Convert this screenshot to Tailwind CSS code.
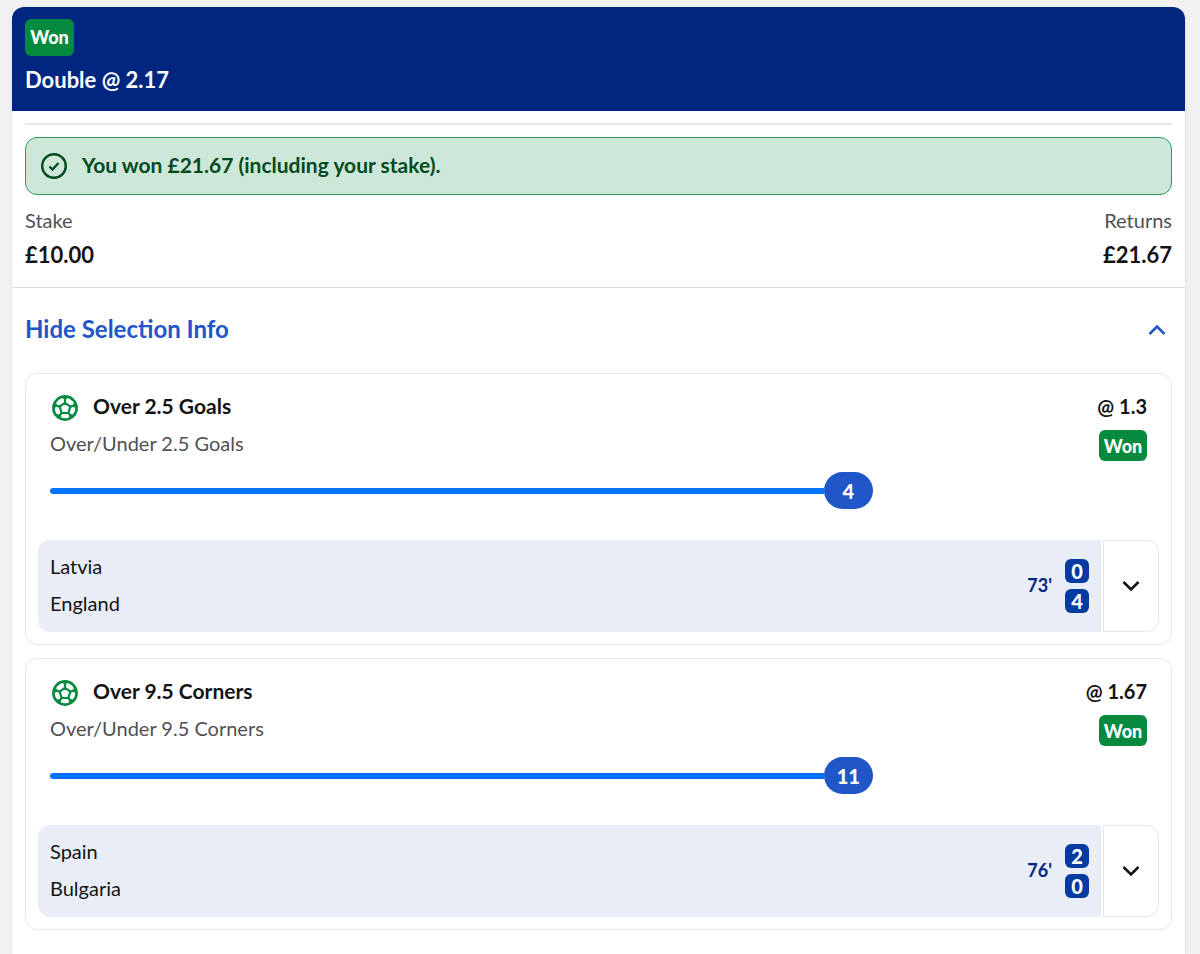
<!DOCTYPE html>
<html lang="en">

<head>
  <meta charset="UTF-8" />
  <meta name="viewport" content="width=device-width, initial-scale=1.0" />
  <title>My Bets</title>
  <script src="https://cdn.jsdelivr.net/npm/@tailwindcss/browser@4"></script>
</head>

<body class="bg-[#f1f1f2] pt-[7px] pl-3 pr-[15px] font-['Lato','Noto_Sans',sans-serif] text-xl leading-[26px] text-[#141414]">
  <svg class="hidden">
    <symbol id="football" viewBox="0 0 26 26">
      <g fill="none" stroke="currentColor" stroke-width="2.2" stroke-linejoin="round">
        <circle cx="13" cy="13" r="11.6" stroke-width="2.6" />
        <path d="M13 7.800l5.400 3.900-2.100 6.300H9.700L7.600 11.700z" />
        <path d="M13 7.800V3M18.400 11.700l4.300-1.700M16.300 18l2.900 3.500M9.700 18l-2.900 3.500M7.600 11.700l-4.300-1.700" />
      </g>
      <path d="M10 2h6l-3 3.500zM22.200 7.500l1.800 6-3.500-2.500zM21.500 19.500l-5 3.500 1-4zM4.500 19.500l5 3.500-1-4zM3.800 7.500l-1.800 6 3.500-2.500z" fill="currentColor" />
    </symbol>
    <symbol id="chevron" viewBox="0 0 18 12">
      <path d="M1.500 2l7.500 7.500L16.500 2" fill="none" stroke="currentColor" stroke-width="2.600" />
    </symbol>
  </svg>

  <main class="min-h-[calc(100vh-7px)] bg-white rounded-t-xl shadow-sm">
    <!-- Bet header -->
    <header class="rounded-t-xl bg-[#00267f] px-[13px] pt-3 pb-4 text-white">
      <span class="flex h-[37px] w-[49px] items-center justify-center rounded-md bg-[#058a40] pb-0.5 text-lg font-black">Won</span>
      <h1 class="mt-[9px] text-[22px] leading-[30px] font-bold">Double @ 2.17</h1>
    </header>

    <!-- Stake and returns -->
    <section class="border-b border-[#dcdcde] px-[13px] pt-3 pb-4">
      <hr class="border-t-2 border-[#e8e8ea]" />
      <p class="mt-3 flex h-[58px] items-center gap-3.5 rounded-xl border border-[#2f9a62] bg-[#cde8d9] px-3.5 text-[21px] font-bold text-[#03491f]">
        <svg class="size-7" viewBox="0 0 28 28" fill="none" stroke="currentColor" stroke-width="2.400">
          <circle cx="14" cy="14" r="11.800" />
          <path d="M9.500 14.500l3 3 6-6.500" />
        </svg>
        <span class="pb-0.5">You won £21.67 (including your stake).</span>
      </p>
      <dl class="mt-3 flex justify-between">
        <div>
          <dt class="text-[#505054]">Stake</dt>
          <dd class="mt-1.5 text-[22px] leading-8 font-bold">£10.00</dd>
        </div>
        <div class="text-right">
          <dt class="text-[#505054]">Returns</dt>
          <dd class="mt-1.5 text-[22px] leading-8 font-bold">£21.67</dd>
        </div>
      </dl>
    </section>

    <button type="button" class="flex h-[85px] w-full items-center justify-between pb-0.5 pl-[13px] pr-[19px] text-2xl font-bold text-[#2056c7]">
      <span class="pb-0.5">Hide Selection Info</span>
      <svg class="h-3 w-[18px] rotate-180"><use href="#chevron" /></svg>
    </button>

    <!-- Selections -->
    <div class="space-y-[13px] px-[13px] pb-6">
      <article class="rounded-xl border border-[#e8e8ea] px-3 pt-[19px] pb-3">
        <div class="flex justify-between px-3">
          <div>
            <h2 class="flex items-start gap-[15px] pl-0.5 text-[21px] font-bold">
              <svg class="mt-0.5 size-[26px] text-[#058a40]"><use href="#football" /></svg>
              Over 2.5 Goals
            </h2>
            <p class="mt-[9px] text-[#505054]">Over/Under 2.5 Goals</p>
          </div>
          <div class="flex flex-col items-end">
            <span class="font-bold">@ 1.3</span>
            <span class="mt-[11px] flex h-[31px] w-12 items-center justify-center rounded-md bg-[#058a40] text-lg font-black text-white">Won</span>
          </div>
        </div>
        <div class="mt-[11px] px-3">
          <div class="flex items-center" style="width: 75%">
            <div class="h-1.5 flex-1 rounded-l-full bg-[#0073ff]"></div>
            <span class="flex h-[37px] w-[49px] items-center justify-center rounded-full bg-[#2056c7] font-black text-white">4</span>
          </div>
        </div>
        <div class="mt-[31px] flex h-[92px] gap-0.5">
          <div class="flex flex-1 items-center rounded-l-xl bg-[#e9edf8] px-3">
            <div class="flex-1 pb-0.5 leading-[37px]">
              <p>Latvia</p>
              <p>England</p>
            </div>
            <span class="mr-[13px] pb-0.5 text-lg font-bold text-[#00267f]">73'</span>
            <div class="space-y-1.5 text-center text-xl leading-6 font-black text-white">
              <p class="w-6 rounded-md bg-[#043ba3]">0</p>
              <p class="w-6 rounded-md bg-[#043ba3]">4</p>
            </div>
          </div>
          <button type="button" aria-label="Show match details" class="flex w-14 items-center justify-center rounded-r-xl border border-[#e8e8ea]">
            <svg class="h-3 w-[18px]"><use href="#chevron" /></svg>
          </button>
        </div>
      </article>

      <article class="rounded-xl border border-[#e8e8ea] px-3 pt-[19px] pb-3">
        <div class="flex justify-between px-3">
          <div>
            <h2 class="flex items-start gap-[15px] pl-0.5 text-[21px] font-bold">
              <svg class="mt-0.5 size-[26px] text-[#058a40]"><use href="#football" /></svg>
              Over 9.5 Corners
            </h2>
            <p class="mt-[9px] text-[#505054]">Over/Under 9.5 Corners</p>
          </div>
          <div class="flex flex-col items-end">
            <span class="font-bold">@ 1.67</span>
            <span class="mt-[11px] flex h-[31px] w-12 items-center justify-center rounded-md bg-[#058a40] text-lg font-black text-white">Won</span>
          </div>
        </div>
        <div class="mt-[11px] px-3">
          <div class="flex items-center" style="width: 75%">
            <div class="h-1.5 flex-1 rounded-l-full bg-[#0073ff]"></div>
            <span class="flex h-[37px] w-[49px] items-center justify-center rounded-full bg-[#2056c7] font-black text-white">11</span>
          </div>
        </div>
        <div class="mt-[31px] flex h-[92px] gap-0.5">
          <div class="flex flex-1 items-center rounded-l-xl bg-[#e9edf8] px-3">
            <div class="flex-1 pb-0.5 leading-[37px]">
              <p>Spain</p>
              <p>Bulgaria</p>
            </div>
            <span class="mr-[13px] pb-0.5 text-lg font-bold text-[#00267f]">76'</span>
            <div class="space-y-1.5 text-center text-xl leading-6 font-black text-white">
              <p class="w-6 rounded-md bg-[#043ba3]">2</p>
              <p class="w-6 rounded-md bg-[#043ba3]">0</p>
            </div>
          </div>
          <button type="button" aria-label="Show match details" class="flex w-14 items-center justify-center rounded-r-xl border border-[#e8e8ea]">
            <svg class="h-3 w-[18px]"><use href="#chevron" /></svg>
          </button>
        </div>
      </article>
    </div>
  </main>
</body>

</html>
